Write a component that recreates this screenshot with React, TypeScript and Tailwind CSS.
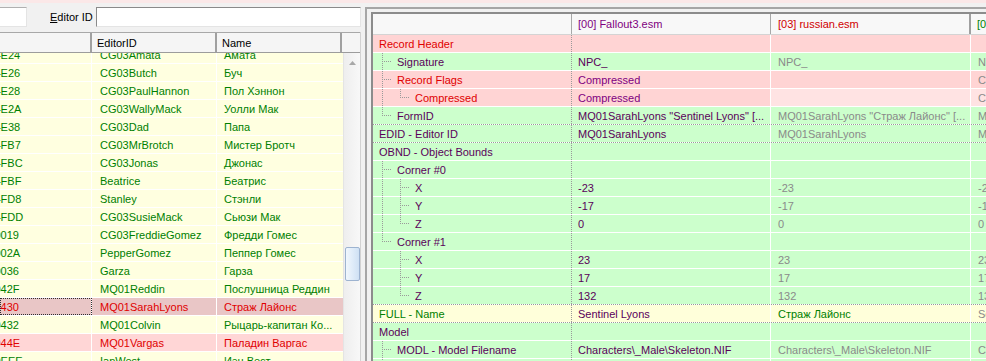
import React from "react";

type LRow = { id: string; ed: string; name: string; st?: "sel" | "pink" };

const leftRows: LRow[] = [
  { id: "00014E24", ed: "CG03Amata", name: "Амата" },
  { id: "00014E26", ed: "CG03Butch", name: "Буч" },
  { id: "00014E28", ed: "CG03PaulHannon", name: "Пол Хэннон" },
  { id: "00014E2A", ed: "CG03WallyMack", name: "Уолли Мак" },
  { id: "00014E38", ed: "CG03Dad", name: "Папа" },
  { id: "00014FB7", ed: "CG03MrBrotch", name: "Мистер Бротч" },
  { id: "00014FBC", ed: "CG03Jonas", name: "Джонас" },
  { id: "00014FBF", ed: "Beatrice", name: "Беатрис" },
  { id: "00014FD8", ed: "Stanley", name: "Стэнли" },
  { id: "00014FDD", ed: "CG03SusieMack", name: "Сьюзи Мак" },
  { id: "00020019", ed: "CG03FreddieGomez", name: "Фредди Гомес" },
  { id: "0002002A", ed: "PepperGomez", name: "Пеппер Гомес" },
  { id: "00020036", ed: "Garza", name: "Гарза" },
  { id: "0002042F", ed: "MQ01Reddin", name: "Послушница Реддин" },
  { id: "00020430", ed: "MQ01SarahLyons", name: "Страж Лайонс", st: "sel" },
  { id: "00020432", ed: "MQ01Colvin", name: "Рыцарь-капитан Ко..." },
  { id: "0002044E", ed: "MQ01Vargas", name: "Паладин Варгас", st: "pink" },
  { id: "00020EEE", ed: "IanWest", name: "Иэн Вест" },
];

type G = "pipe" | "tee" | "elbow" | "blank";

type RRow = {
  label: string;
  g: G[];
  lc: string;
  bg: string;
  bg3: string;
  v2?: string;
  c2?: string;
  v3?: string;
  c3?: string;
  v4?: string;
  sep?: boolean;
};

const PINK = "bg-[#ffd4d4]";
const PINK2 = "bg-[#ffe3e3]";
const GREEN = "bg-[#ccffcc]";
const YEL = "bg-[#ffffda]";
const RED = "text-[#e00000]";
const PUR = "text-[#5a005a]";
const PUR2 = "text-[#800080]";
const GRAY = "text-[#8a8a8a]";
const GRN = "text-[#008000]";

const rightRows: RRow[] = [
  { label: "Record Header", g: [], lc: RED, bg: PINK, bg3: PINK },
  { label: "Signature", g: ["tee"], lc: PUR, bg: GREEN, bg3: GREEN, v2: "NPC_", c2: PUR, v3: "NPC_", v4: "NPC_" },
  { label: "Record Flags", g: ["tee"], lc: RED, bg: PINK, bg3: PINK, v2: "Compressed", c2: PUR2, v4: "Compressed" },
  { label: "Compressed", g: ["pipe", "elbow"], lc: RED, bg: PINK, bg3: PINK2, v2: "Compressed", c2: PUR2, v4: "Compressed" },
  {
    label: "FormID",
    g: ["elbow"],
    lc: PUR,
    bg: GREEN,
    bg3: GREEN,
    v2: 'MQ01SarahLyons "Sentinel Lyons" [...',
    c2: PUR,
    v3: 'MQ01SarahLyons "Страж Лайонс" [...',
    v4: "MQ01SarahLyons",
    sep: true,
  },
  { label: "EDID - Editor ID", g: [], lc: PUR, bg: GREEN, bg3: GREEN, v2: "MQ01SarahLyons", c2: PUR, v3: "MQ01SarahLyons", v4: "MQ01SarahLyons", sep: true },
  { label: "OBND - Object Bounds", g: [], lc: PUR, bg: GREEN, bg3: GREEN },
  { label: "Corner #0", g: ["tee"], lc: PUR, bg: GREEN, bg3: GREEN },
  { label: "X", g: ["pipe", "tee"], lc: PUR, bg: GREEN, bg3: GREEN, v2: "-23", c2: PUR, v3: "-23", v4: "-23" },
  { label: "Y", g: ["pipe", "tee"], lc: PUR, bg: GREEN, bg3: GREEN, v2: "-17", c2: PUR, v3: "-17", v4: "-17" },
  { label: "Z", g: ["pipe", "elbow"], lc: PUR, bg: GREEN, bg3: GREEN, v2: "0", c2: PUR, v3: "0", v4: "0" },
  { label: "Corner #1", g: ["elbow"], lc: PUR, bg: GREEN, bg3: GREEN },
  { label: "X", g: ["blank", "tee"], lc: PUR, bg: GREEN, bg3: GREEN, v2: "23", c2: PUR, v3: "23", v4: "23" },
  { label: "Y", g: ["blank", "tee"], lc: PUR, bg: GREEN, bg3: GREEN, v2: "17", c2: PUR, v3: "17", v4: "17" },
  { label: "Z", g: ["blank", "elbow"], lc: PUR, bg: GREEN, bg3: GREEN, v2: "132", c2: PUR, v3: "132", v4: "132", sep: true },
  { label: "FULL - Name", g: [], lc: GRN, bg: YEL, bg3: YEL, v2: "Sentinel Lyons", c2: PUR, v3: "Страж Лайонс", c3: GRN, v4: "Sentinel Lyons", sep: true },
  { label: "Model", g: [], lc: PUR, bg: GREEN, bg3: GREEN },
  {
    label: "MODL - Model Filename",
    g: ["tee"],
    lc: PUR,
    bg: GREEN,
    bg3: GREEN,
    v2: "Characters\\_Male\\Skeleton.NIF",
    c2: PUR,
    v3: "Characters\\_Male\\Skeleton.NIF",
    v4: "Characters\\_Male\\Skeleton.NIF",
  },
  { label: "MODB - Bound Radius", g: ["tee"], lc: PUR, bg: GREEN, bg3: GREEN, v2: "0.000000", c2: PUR, v3: "0.000000", v4: "0.000000" },
];

function Guide({ t }: { t: G }) {
  const s = "#9a9a9a";
  return (
    <svg width="18" height="17" className="block shrink-0 self-start" shapeRendering="crispEdges">
      {(t === "pipe" || t === "tee") && (
        <line x1="9.5" y1="0" x2="9.5" y2="17" stroke={s} strokeWidth="1" strokeDasharray="1 1" />
      )}
      {t === "elbow" && <line x1="9.5" y1="0" x2="9.5" y2="9" stroke={s} strokeWidth="1" strokeDasharray="1 1" />}
      {(t === "tee" || t === "elbow") && (
        <line x1="11" y1="8.5" x2="19" y2="8.5" stroke={s} strokeWidth="1" strokeDasharray="1 1" />
      )}
    </svg>
  );
}

function LeftPanel() {
  return (
    <div className="w-[361px] shrink-0 flex flex-col">
      <div className="h-[29px] shrink-0 flex pt-[4px]">
        <div className="w-[27px] h-[20px] bg-white border border-l-0 border-t-[#b0b0b0] border-b-[#e4e4e4] border-r-[#e4e4e4]" />
        <div className="w-[69px] h-[20px] flex items-center pl-[23px] pt-[1px] text-black whitespace-nowrap">
          <span>
            <span className="underline underline-offset-1">E</span>ditor ID
          </span>
        </div>
        <div className="w-[265px] h-[20px] bg-white border border-t-[#8a8a8a] border-l-[#8a8a8a] border-r-[#e4e4e4] border-b-[#e4e4e4]" />
      </div>
      <div className="flex-1 min-h-0 flex flex-col border-r border-[#d2d2d2]">
        <div className="h-[21px] shrink-0 flex bg-[#f5f5f5] border-t border-b border-t-[#a8a8a8] border-b-[#9c9c9c] text-black">
          <div className="w-[92px] shrink-0 border-r-2 border-[#a0a0a0]" />
          <div className="w-[125px] shrink-0 border-r-2 border-[#a0a0a0] flex items-center pl-[5px] pt-[1px]">EditorID</div>
          <div className="w-[125px] shrink-0 border-r-2 border-[#a0a0a0] flex items-center pl-[5px] pt-[1px]">Name</div>
          <div className="flex-1" />
        </div>
        <div className="flex-1 min-h-0 flex overflow-hidden">
          <div className="w-[343px] shrink-0 overflow-hidden bg-[#ffffe0]">
            <div className="mt-[-7px] flex flex-col">
              {leftRows.map((r, i) => {
                const cls =
                  r.st === "sel"
                    ? "bg-[#e9c6c6] text-[#e00000]"
                    : r.st === "pink"
                    ? "bg-[#ffd6d6] text-[#e00000]"
                    : "bg-[#ffffe0] text-[#008000]";
                return (
                  <div key={i} className="h-[18px] shrink-0 flex border-b border-white bg-white">
                    <div
                      className={`w-[92px] shrink-0 border-r border-white overflow-hidden whitespace-nowrap flex items-center pt-[2px] ${cls} ${
                        r.st === "sel" ? "outline outline-1 outline-dotted outline-[#303030] -outline-offset-1" : ""
                      }`}
                    >
                      <span className="block ml-[-30px]">{r.id}</span>
                    </div>
                    <div className={`w-[125px] shrink-0 border-r border-white overflow-hidden whitespace-nowrap flex items-center pt-[2px] pl-[8px] ${cls}`}>
                      {r.ed}
                    </div>
                    <div className={`w-[126px] shrink-0 overflow-hidden whitespace-nowrap flex items-center pt-[2px] pl-[7px] ${cls}`}>
                      {r.name}
                    </div>
                  </div>
                );
              })}
            </div>
          </div>
          <div className="w-[17px] shrink-0 bg-linear-to-r from-[#eeeeee] to-[#f8f8f8] border-l border-[#e4e4e4] flex flex-col items-center">
            <div className="h-[20px] w-full flex items-center justify-center">
              <svg width="7" height="4" className="block">
                <path d="M3.5 0 L7 4 L0 4 Z" fill="#a8a8a8" />
              </svg>
            </div>
            <div className="h-[174px] shrink-0" />
            <div className="w-[15px] h-[34px] shrink-0 rounded-[2px] border border-[#9db3d0] bg-linear-to-r from-[#f1f7fd] to-[#cfe1f4]" />
          </div>
        </div>
      </div>
    </div>
  );
}

function RightPanel() {
  return (
    <div className="flex-1 min-w-0 ml-[4px] mt-[4px] border-l-2 border-t-2 border-[#a6a6a6] pl-[4px] pt-[3px] flex flex-col overflow-hidden">
      <div className="flex-1 min-h-0 border-l-2 border-t-2 border-[#8c8c8c] flex flex-col overflow-hidden bg-white">
        <div className="h-[21px] shrink-0 flex bg-[#f8f8f8] border-b border-[#d4d4d4] whitespace-nowrap">
          <div className="w-[199px] shrink-0 border-r border-[#a8a8a8]" />
          <div className="w-[199px] shrink-0 border-r border-[#a8a8a8] flex items-center pl-[6px] pt-[1px] text-[#800080]">
            [00] Fallout3.esm
          </div>
          <div className="w-[200px] shrink-0 border-r-2 border-[#a0a0a0] flex items-center pl-[7px] pt-[1px] text-[#d00000]">
            [03] russian.esm
          </div>
          <div className="w-[200px] shrink-0 flex items-center pl-[6px] pt-[1px] text-[#008000]">[04] Fallout3_RU.esp</div>
        </div>
        <div className="flex flex-col">
          {rightRows.map((r, i) => (
            <div
              key={i}
              className={`h-[18px] shrink-0 flex border-b whitespace-nowrap bg-white ${
                r.sep ? "border-dotted border-[#9a9a9a]" : "border-white"
              }`}
            >
              <div className={`w-[199px] shrink-0 flex items-center border-r border-dotted border-[#9a9a9a] overflow-hidden ${r.bg}`}>
                {r.g.map((g, k) => (
                  <Guide key={k} t={g} />
                ))}
                <span className={`pl-[6px] pt-[2px] ${r.lc}`}>{r.label}</span>
              </div>
              <div className={`w-[199px] shrink-0 flex items-center border-r border-white overflow-hidden pl-[6px] pt-[2px] ${r.bg} ${r.c2 ?? PUR}`}>
                {r.v2 ?? ""}
              </div>
              <div className={`w-[200px] shrink-0 flex items-center border-r border-white overflow-hidden pl-[7px] pt-[2px] ${r.bg3} ${r.c3 ?? GRAY}`}>
                {r.v3 ?? ""}
              </div>
              <div className={`w-[200px] shrink-0 flex items-center overflow-hidden pl-[7px] pt-[2px] ${r.bg3} ${GRAY}`}>
                {r.v4 ?? ""}
              </div>
            </div>
          ))}
        </div>
      </div>
    </div>
  );
}

export default function App() {
  return (
    <div className="w-[986px] h-[361px] overflow-hidden bg-[#f1f1f1] font-['Liberation_Sans',Arial,sans-serif] text-[11px] leading-none flex flex-col">
      <div className="h-[3px] shrink-0 bg-[#fbe8e8]" />
      <div className="flex flex-1 min-h-0">
        <LeftPanel />
        <RightPanel />
      </div>
    </div>
  );
}
